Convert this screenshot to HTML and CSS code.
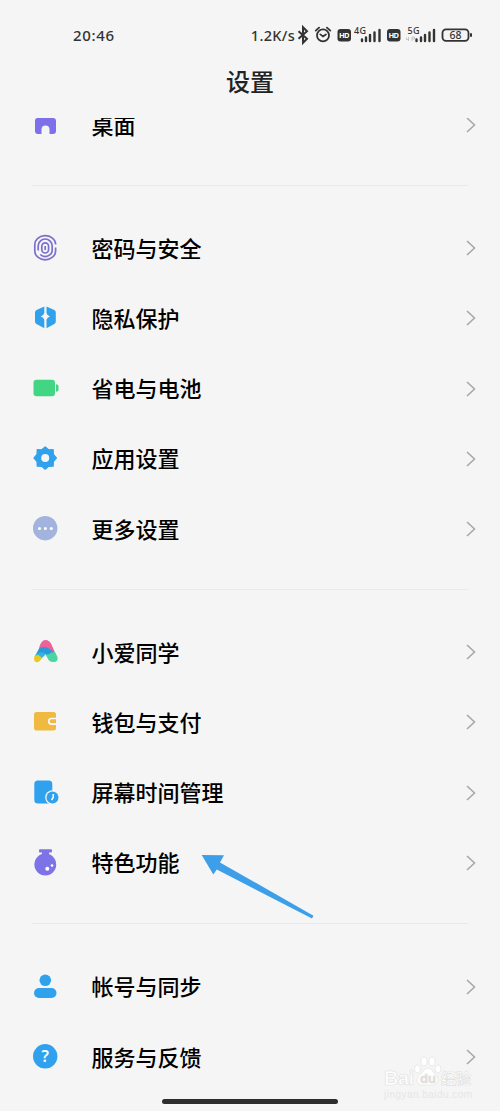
FILE: index.html
```html
<!DOCTYPE html>
<html lang="zh-CN">
<head>
    <meta charset="UTF-8">
    <meta name="viewport" content="width=device-width, initial-scale=1.0">
    <title>设置</title>
    <link rel="stylesheet" href="styles.css">
</head>
<body>
    <header>
        <div class="status-bar">
            <span class="clock">20:46</span>
            <div class="status-right">
                <span class="speed">1.2K/s</span>
                <svg class="status-icons" width="180" height="24" viewBox="0 0 180 24">
                    <!-- 蓝牙 -->
                    <path d="M3.5 8.2l8.500 7.600-4 4V4.200l4 4-8.500 7.600" fill="none" stroke="#333" stroke-width="2"/>
                    <!-- 闹钟 -->
                    <g fill="none" stroke="#333" stroke-width="1.8" stroke-linecap="round">
                        <circle cx="28" cy="12.4" r="6"/>
                        <path d="M20.700 7.600l3.400-3M35.300 7.600l-3.400-3M25.300 11.400l2.700 2 2.900-2"/>
                    </g>
                    <!-- HD -->
                    <rect x="42.500" y="6" width="13.500" height="12.500" rx="3" fill="#333"/>
                    <text class="hd" x="44" y="15" textLength="10.500">HD</text>
                    <text class="net" x="59" y="10.500" textLength="12">4G</text>
                    <path d="M67 16.500v1.500M71 14.500v3.500M75 12v6M79.500 9.500v8.500M84.500 7v11" class="bars"/>
                    <rect x="92" y="6" width="13.500" height="12.500" rx="3" fill="#333"/>
                    <text class="hd" x="93.500" y="15" textLength="10.500">HD</text>
                    <text class="net" x="112.500" y="10.500" textLength="12">5G</text>
                    <path d="M111.500 14.500v2h2.500M113.500 14v4M117 18v-4h2.500v2H117" fill="none" stroke="#bbb" stroke-width=".8"/>
                    <path d="M121.500 16.500v1.500M126 14.500v3.500M130 12v6M134.500 9.500v8.500M139 7v11" class="bars"/>
                    <!-- 电池 -->
                    <rect x="147.500" y="6.300" width="26" height="11.500" rx="3.500" fill="none" stroke="#333" stroke-width="1.800"/>
                    <path d="M176 10.300v3.500" stroke="#333" stroke-width="2"/>
                    <text class="level" x="154.500" y="15.800" textLength="12">68</text>
                </svg>
            </div>
        </div>
        <h1>设置</h1>
    </header>

    <main>
        <section class="group">
            <div class="row">
                <svg class="icon" viewBox="0 0 30 30"><path d="M7.500 8h15.500q3 0 3 3v10q0 3-3 3h-3.500v-4.500a4 4 0 0 0-8 0V24h-3.500q-3 0-3-3V11q0-3 2.500-3z" fill="#7d70e8"/></svg>
                <span class="label">桌面</span>
                <svg class="arrow" viewBox="0 0 10 16"><path d="M1 1l7.500 7L1 15"/></svg>
            </div>
        </section>

        <section class="group">
            <div class="row">
                <svg class="icon" viewBox="0 0 30 30">
                    <g fill="none" stroke="#7b70cc" stroke-width="1.700">
                        <path d="M25.600 11.500v-.5A10.400 8.800 0 0 0 4.800 12v6a10.400 8.800 0 0 0 20.800 0v-3.500"/>
                        <path d="M8.200 17.500V13a7 7 0 0 1 14 0v4a7 6.500 0 0 1-12 4.500"/>
                        <rect x="11.800" y="9.800" width="6.800" height="10.200" rx="3.400"/>
                        <path d="M15.200 13v4"/>
                    </g>
                </svg>
                <span class="label">密码与安全</span>
                <svg class="arrow" viewBox="0 0 10 16"><path d="M1 1l7.500 7L1 15"/></svg>
            </div>
            <div class="row">
                <svg class="icon" viewBox="0 0 30 30">
                    <path d="M14.300 3.500L6.500 7.100Q5 7.800 5 9.500v9q0 1.700 1.500 2.500l7.800 4.200V16.700q-.6-2.700-3.600-3.300 3-.6 3.600-3.400zM16.500 3.500l7.800 3.600q1.500.7 1.500 2.400v9q0 1.700-1.500 2.500l-7.800 4.200V16.700q.6-2.700 3.400-3.300-2.800-.6-3.400-3.400z" fill="#30a2ed"/>
                </svg>
                <span class="label">隐私保护</span>
                <svg class="arrow" viewBox="0 0 10 16"><path d="M1 1l7.500 7L1 15"/></svg>
            </div>
            <div class="row">
                <svg class="icon" viewBox="0 0 30 30">
                    <rect x="3.500" y="5.700" width="21.500" height="16.500" rx="3" fill="#42d684"/>
                    <path d="M26 10.200q2.500 0 2.500 2v3.500q0 2-2.500 2z" fill="#42d684"/>
                </svg>
                <span class="label">省电与电池</span>
                <svg class="arrow" viewBox="0 0 10 16"><path d="M1 1l7.500 7L1 15"/></svg>
            </div>
            <div class="row">
                <svg class="icon" viewBox="0 0 30 30">
                    <path d="M15.200 3l3.300 2.900 4.600-.1.200 4.600 3 3.600-3 3.500-.2 4.600-4.600.1-3.300 2.900-3.300-2.900-4.600-.1-.2-4.600-3-3.500 3-3.600.2-4.600 4.600.1z" fill="#30a2ed" stroke="#30a2ed" stroke-width="1.400" stroke-linejoin="round"/>
                    <circle cx="15.200" cy="14" r="4" fill="#f5f5f5"/>
                </svg>
                <span class="label">应用设置</span>
                <svg class="arrow" viewBox="0 0 10 16"><path d="M1 1l7.500 7L1 15"/></svg>
            </div>
            <div class="row">
                <svg class="icon" viewBox="0 0 30 30">
                    <circle cx="15.200" cy="14.200" r="12.200" fill="#a2b3de"/>
                    <g fill="#fff"><circle cx="9.500" cy="14.500" r="1.500"/><circle cx="15.400" cy="14.500" r="1.500"/><circle cx="21.300" cy="14.500" r="1.500"/></g>
                </svg>
                <span class="label">更多设置</span>
                <svg class="arrow" viewBox="0 0 10 16"><path d="M1 1l7.500 7L1 15"/></svg>
            </div>
        </section>

        <section class="group">
            <div class="row">
                <svg class="icon" viewBox="0 0 30 30">
                    <path d="M9 11.500Q10.800 3 15.500 3q4 0 6 4.500l3.500 8-6-.5-5-3z" fill="#ec6299"/>
                    <path d="M4.800 19.500L9.300 11q4.700-2 8.700 0 4.500 2.500 7.500 5.500l-5 5-5-4.500-6 5z" fill="#2c98dc"/>
                    <path d="M5.500 17.500q5.500-3.500 10.500-.5l-6 6z" fill="#35b5d5"/>
                    <path d="M4.300 19.500q1.500-2 4-1.500l3.500 2.500q-1.500 4.200-4.300 4.800-4.300.3-3.200-5.800z" fill="#e8c91f"/>
                    <path d="M15.500 17.500q3.500.5 6-2l3.500-.5 2.500 5q1 5-4.500 5-4 0-5.500-4z" fill="#4bd3a1"/>
                </svg>
                <span class="label">小爱同学</span>
                <svg class="arrow" viewBox="0 0 10 16"><path d="M1 1l7.500 7L1 15"/></svg>
            </div>
            <div class="row">
                <svg class="icon" viewBox="0 0 30 30">
                    <rect x="4" y="5" width="22" height="18.500" rx="2.500" fill="#f0b942"/>
                    <path d="M26.500 11.500h-5a2.700 2.700 0 0 0 0 5.600h5" fill="none" stroke="#fafafa" stroke-width="1.700"/>
                </svg>
                <span class="label">钱包与支付</span>
                <svg class="arrow" viewBox="0 0 10 16"><path d="M1 1l7.500 7L1 15"/></svg>
            </div>
            <div class="row">
                <svg class="icon" viewBox="0 0 30 30">
                    <rect x="4.300" y="2.500" width="18" height="23" rx="3.500" fill="#30a2ed"/>
                    <circle cx="22.500" cy="19.500" r="7.300" fill="#f5f5f5"/>
                    <circle cx="22.500" cy="19.500" r="6" fill="#30a2ed"/>
                    <path d="M23.200 16v3.500l-1.700 2.500" fill="none" stroke="#fff" stroke-width="1.500"/>
                </svg>
                <span class="label">屏幕时间管理</span>
                <svg class="arrow" viewBox="0 0 10 16"><path d="M1 1l7.500 7L1 15"/></svg>
            </div>
            <div class="row">
                <svg class="icon" viewBox="0 0 30 30">
                    <path d="M10 1.200h11q1 0 1 1v1.300q0 1-1 1h-2v2.700h-7V4.500h-2q-1 0-1-1V2.200q0-1 1-1z" fill="#7d73e6"/>
                    <circle cx="15.300" cy="16.500" r="10.900" fill="#7d73e6"/>
                    <circle cx="17.300" cy="20.700" r="2" fill="#fff"/><circle cx="22" cy="17.500" r="1.300" fill="#fff"/>
                </svg>
                <span class="label">特色功能</span>
                <svg class="arrow" viewBox="0 0 10 16"><path d="M1 1l7.500 7L1 15"/></svg>
                <svg class="pointer" width="114" height="66" viewBox="0 0 114 66">
                    <path d="M.7 1L23 1.300l-4 7.200L112.500 61.700 111 64.500 15.800 15.500 12.300 20.500z" fill="#3d9fea"/>
                </svg>
            </div>
        </section>

        <section class="group">
            <div class="row">
                <svg class="icon" viewBox="0 0 30 30">
                    <circle cx="15.300" cy="8.300" r="5.800" fill="#30a2ed"/>
                    <rect x="4" y="16" width="22.500" height="10" rx="5" fill="#30a2ed"/>
                </svg>
                <span class="label">帐号与同步</span>
                <svg class="arrow" viewBox="0 0 10 16"><path d="M1 1l7.500 7L1 15"/></svg>
            </div>
            <div class="row">
                <svg class="icon" viewBox="0 0 30 30">
                    <circle cx="15.200" cy="14.300" r="12.200" fill="#30a2ed"/>
                    <text class="question" x="15.300" y="20" text-anchor="middle">?</text>
                </svg>
                <span class="label">服务与反馈</span>
                <svg class="arrow" viewBox="0 0 10 16"><path d="M1 1l7.500 7L1 15"/></svg>
            </div>
        </section>
    </main>

    <svg class="watermark" width="96" height="48" viewBox="0 0 96 48">
        <g class="mark">
            <text x="1" y="30" font-size="20" textLength="30">Bai</text>
            <text x="58" y="29" font-size="15" textLength="30">经验</text>
            <ellipse cx="34.500" cy="14" rx="3" ry="4"/>
            <ellipse cx="41" cy="6.500" rx="3" ry="4.300"/>
            <ellipse cx="49" cy="6.500" rx="3" ry="4.300"/>
            <ellipse cx="55" cy="14" rx="3" ry="4"/>
            <path d="M45 13q4 0 6 5 5 4 4 8-1 4-5 4H38q-4-1-4-5 0-3 5-7 2-5 6-5z"/>
            <text x="37" y="28" font-size="13" class="du">du</text>
        </g>
        <text x="1" y="43" class="site" textLength="88">jingyan.baidu.com</text>
    </svg>
    <div class="home-bar"></div>
</body>
</html>
```

FILE: styles.css
```css
* {
    box-sizing: border-box;
}

body {
    font-family: "Noto Sans CJK SC", sans-serif;
    margin: 0;
    height: 1111px;
    position: relative;
    overflow: hidden;
    background: #f5f5f5;
    color: #000;
}

header {
    height: 118px;
    padding-top: 22px;
}

.status-bar {
    display: flex;
    justify-content: space-between;
    align-items: center;
    height: 25px;
    padding: 0 25px 0 73px;
    font-family: "Noto Sans", sans-serif;
    font-size: 15px;
    font-weight: 500;
    color: #333;
}

.clock {
    letter-spacing: 0.7px;
}

.status-right {
    display: flex;
    align-items: center;
}

.speed {
    font-size: 14.5px;
    letter-spacing: 0.3px;
}

.status-icons {
    display: block;
}

.hd {
    font-size: 7.5px;
    font-weight: bold;
    fill: #fff;
}

.net {
    font-size: 9px;
    fill: #333;
}

.level {
    font-size: 10.5px;
    fill: #333;
}

.bars {
    stroke: #333;
    stroke-width: 2.4;
    stroke-linecap: round;
}

h1 {
    margin: 16px 0 0;
    font-size: 24px;
    line-height: 36px;
    font-weight: 500;
    text-align: center;
    color: #222;
}

/* 列表滚动到标题下方 */
main {
    height: 993px;
    overflow: hidden;
}

.group {
    margin: 0 32px;
    padding: 27px 0 25px;
    border-bottom: 1px solid #e9e9e9;
}

.group:first-child {
    margin-top: -28px;
    padding-top: 0;
}

.group:last-child {
    padding-top: 28px;
    border-bottom: none;
}

.row {
    display: flex;
    align-items: center;
    height: 70.2px;
    position: relative;
}

.icon {
    width: 30px;
    height: 30px;
    margin-left: -2px;
}

.label {
    flex: 1;
    margin-left: 31.5px;
    padding-bottom: 3px;
    font-size: 22px;
    line-height: 30px;
    font-weight: 500;
}

.arrow {
    width: 10px;
    height: 16px;
    margin-right: -8px;
    fill: none;
    stroke: #a8a8a8;
    stroke-width: 1.6;
}

.pointer {
    position: absolute;
    left: 169px;
    top: 26px;
}

.question {
    font-family: "Noto Sans", sans-serif;
    font-size: 16px;
    font-weight: 600;
    fill: #fff;
}

.watermark {
    position: absolute;
    left: 383px;
    top: 1055px;
}

.mark {
    font-family: "Liberation Sans", "Noto Sans CJK SC", sans-serif;
    font-weight: bold;
    fill: #fff;
    stroke: #dedede;
    stroke-width: 0.6;
}

.du {
    fill: #e0e0e0;
}

.site {
    font-family: "Liberation Sans", sans-serif;
    font-size: 10px;
    fill: #e6e6e6;
}

.home-bar {
    position: absolute;
    left: 162px;
    top: 1099px;
    width: 176px;
    height: 5px;
    border-radius: 3px;
    background: #2d2d2d;
}
```
